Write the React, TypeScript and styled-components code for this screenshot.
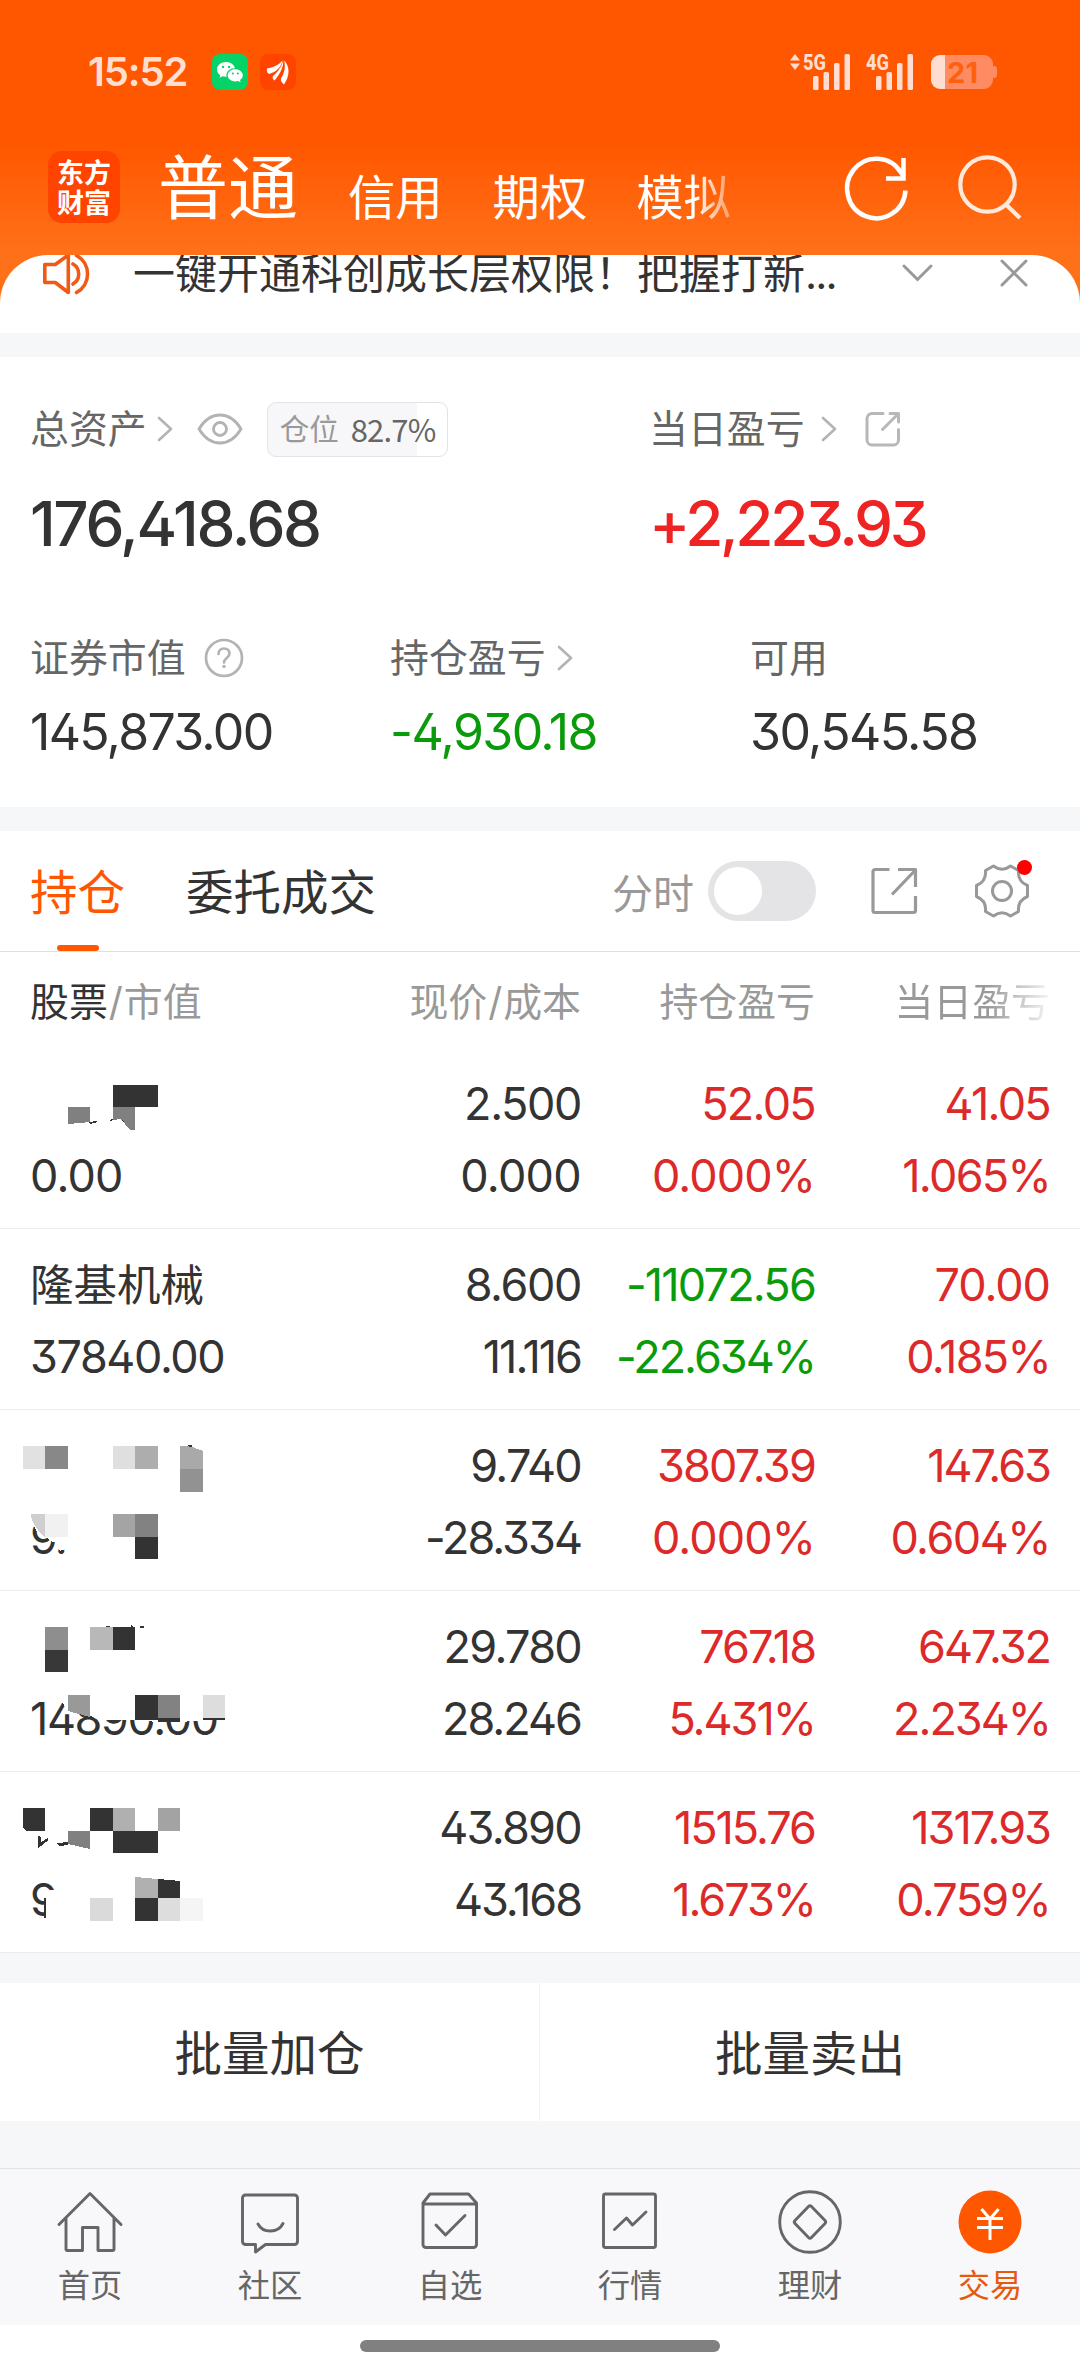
import React from "react";
import styled, { createGlobalStyle } from "styled-components";

const GlobalStyle = createGlobalStyle`
  * { box-sizing: border-box; }
  body {
    margin: 0;
    background: #fff;
    color: #333;
    font-family: Inter, "Noto Sans CJK SC", sans-serif;
    font-feature-settings: "cv02", "cv09";
    font-weight: 400;
  }
  svg { display: block; flex: none; overflow: visible; }
`;

const Page = styled.div`
  width: 1080px;
  height: 2373px;
  overflow: hidden;
  display: flex;
  flex-direction: column;
  background: #f6f7f9;
`;

/* ---------- header ---------- */
const Header = styled.header`
  height: 303px;
  flex: none;
  background: linear-gradient(#ff5700 0, #ff5700 142px, #ff7119 255px, #ff7119 303px);
`;
const StatusBar = styled.div`
  height: 144px;
  padding: 0 83px 0 88px;
  display: flex;
  align-items: center;
  color: #ffddd0;
`;
const Clock = styled.span`
  width: 124px;
  font-size: 40px;
  line-height: 44px;
  font-weight: 600;
  letter-spacing: -1.100px;
  white-space: nowrap;
`;
const NoticeApps = styled.div`
  display: flex;
  gap: 12px;
  flex: 1;
`;
const Signal = styled.div<{ $gap: number }>`
  display: flex;
  margin-right: ${(p) => p.$gap}px;
`;
const TitleBar = styled.nav`
  height: 111px;
  padding: 0 58px 0 48px;
  display: flex;
  align-items: flex-start;
  color: #fff;
`;
const Logo = styled.div`
  width: 72px;
  height: 72px;
  margin-top: 7px;
  border-radius: 14px;
  background: #ff4400;
  display: grid;
  place-content: center;
  font-size: 27px;
  line-height: 30px;
  font-weight: 700;
  font-family: "Noto Sans CJK SC", sans-serif;
`;
const AccountTab = styled.span<{ $size: number; $left: number; $top: number; $fade?: boolean }>`
  font-size: ${(p) => p.$size}px;
  line-height: 80px;
  margin-left: ${(p) => p.$left}px;
  margin-top: ${(p) => p.$top}px;
  white-space: nowrap;
  ${(p) =>
    p.$fade &&
    `background: linear-gradient(90deg, #fff 62%, rgba(255,255,255,.35) 100%);
     -webkit-background-clip: text; background-clip: text; color: transparent;`}
`;
const HeaderIcons = styled.div`
  margin-left: auto;
  margin-top: 11px;
  display: flex;
  gap: 49px;
`;

/* ---------- notice ---------- */
const Notice = styled.section`
  height: 78px;
  margin-top: -48px;
  flex: none;
  overflow: hidden;
  background: #fff;
  border-radius: 48px 48px 0 0;
  padding: 0 52px 0 41px;
  display: flex;
  align-items: flex-start;
`;
const NoticeText = styled.span`
  margin-left: 42px;
  margin-top: -11px;
  width: 769px;
  font-size: 42px;
  line-height: 60px;
  white-space: nowrap;
`;
const Dots = styled.span`
  letter-spacing: -1.800px;
`;
const IconSlot = styled.span<{ $top: number; $left?: number }>`
  display: block;
  margin-top: ${(p) => p.$top}px;
  margin-left: ${(p) => p.$left ?? 0}px;
`;

/* ---------- assets ---------- */
const Assets = styled.section`
  margin-top: 24px;
  height: 450px;
  flex: none;
  background: #fff;
  padding: 42px 30px 0;
`;
const MainFigures = styled.div`
  display: grid;
  grid-template-columns: 619px 1fr;
`;
const SubFigures = styled.div`
  margin-top: 69px;
  display: grid;
  grid-template-columns: 360px 360px 1fr;
`;
const Label = styled.div`
  height: 60px;
  display: flex;
  align-items: center;
  font-size: 38.900px;
  line-height: 60px;
  color: #666;
  white-space: nowrap;
`;
const Gap = styled.span<{ $w: number }>`
  width: ${(p) => p.$w}px;
  flex: none;
`;
const Position = styled.span`
  width: 181px;
  height: 55px;
  border: 1px solid #e2e3e6;
  border-radius: 9px;
  background: linear-gradient(90deg, #f7f7fa 83%, #fff 83%);
  display: flex;
  align-items: center;
  gap: 12px;
  padding-left: 12px;
  font-size: 29.500px;
  color: #999;
`;
const PositionRate = styled.span`
  font-family: "Noto Sans CJK SC", sans-serif;
  font-size: 31px;
  letter-spacing: -0.800px;
  color: #666;
`;
const Total = styled.div<{ $color?: string; $ls: number }>`
  margin-top: 30px;
  font-size: 62px;
  line-height: 70px;
  font-weight: 500;
  letter-spacing: ${(p) => p.$ls}px;
  color: ${(p) => p.$color ?? "#333"};
`;
const Amount = styled.div<{ $color?: string; $ls: number }>`
  margin-top: 14px;
  font-size: 50px;
  line-height: 60px;
  letter-spacing: ${(p) => p.$ls}px;
  color: ${(p) => p.$color ?? "#333"};
`;

/* ---------- holdings ---------- */
const Holdings = styled.section`
  margin-top: 24px;
  flex: none;
  background: #fff;
`;
const TabRow = styled.div`
  height: 121px;
  border-bottom: 1px solid #dedfe0;
  padding: 0 51px 0 30px;
  display: flex;
  align-items: stretch;
`;
const Tab = styled.div<{ $active?: boolean }>`
  font-size: 47.500px;
  line-height: 124px;
  margin-right: 61px;
  color: ${(p) => (p.$active ? "#ff5700" : "#333")};
  display: flex;
  flex-direction: column;
  align-items: center;
  white-space: nowrap;
`;
const TabMark = styled.span`
  width: 42px;
  height: 6px;
  margin-top: -10px;
  border-radius: 3px;
  background: #ff5700;
`;
const Tools = styled.div`
  margin-left: auto;
  display: flex;
  align-items: center;
  font-size: 41px;
  color: #999;
`;
const Toggle = styled.span`
  width: 108px;
  height: 60px;
  border-radius: 30px;
  margin: 0 55px 0 14px;
  padding: 6px;
  background: #e4e4e6;
`;
const Knob = styled.span`
  display: block;
  width: 48px;
  height: 48px;
  border-radius: 50%;
  background: #fff;
`;
const Settings = styled.span`
  position: relative;
  margin-left: 57px;
`;
const RedDot = styled.i`
  position: absolute;
  right: -3px;
  top: -4px;
  width: 15px;
  height: 15px;
  border-radius: 50%;
  background: #f00;
`;
const Row = styled.div`
  display: grid;
  grid-template-columns: 351px 200px 234px 1fr;
  padding: 0 30px;
  text-align: right;
`;
const HeadRow = styled(Row)`
  height: 96px;
  padding-top: 19px;
  font-size: 38.900px;
  line-height: 62px;
  color: #999;
  white-space: nowrap;
`;
const FadingHead = styled.span`
  background: linear-gradient(90deg, #999 60%, rgba(153, 153, 153, 0.1) 100%);
  background-size: 156px 100%;
  background-position: right;
  background-repeat: no-repeat;
  -webkit-background-clip: text;
  background-clip: text;
  color: transparent;
`;
const Left = styled.span`
  text-align: left;
`;
const Strong = styled.span`
  color: #333;
`;
const Slash = styled.span`
  margin: 0 1px;
`;
const StockRow = styled(Row)`
  position: relative;
  height: 181px;
  padding-top: 26px;
  border-bottom: 1px solid #ebecee;
`;
const Cell = styled.div<{ $color?: string; $left?: boolean }>`
  display: flex;
  flex-direction: column;
  gap: 12px;
  font-size: 45px;
  line-height: 60px;
  white-space: nowrap;
  text-align: ${(p) => (p.$left ? "left" : "right")};
  color: ${(p) => p.$color ?? "#333"};
`;
const Line = styled.span<{ $ls?: number }>`
  height: 60px;
  letter-spacing: ${(p) => p.$ls ?? 0}px;
`;
const StockName = styled(Line)`
  font-size: 43.500px;
`;
const Mosaic = styled.svg`
  position: absolute;
  left: 0;
  top: 0;
`;

/* ---------- bottom ---------- */
const Batch = styled.div`
  margin-top: 30px;
  height: 138px;
  flex: none;
  display: grid;
  grid-template-columns: 540px 540px;
  background: #fff;
`;
const BatchButton = styled.button`
  border: 0;
  border-right: 1px solid #f3f4f6;
  padding: 0 0 3px;
  background: none;
  color: #333;
  font: inherit;
  font-size: 47.500px;
  &:last-child { border-right: 0; }
`;
const NavBar = styled.nav`
  margin-top: 47px;
  height: 157px;
  flex: none;
  border-top: 1px solid #e2e3e6;
  background: #f8f8fa;
  display: grid;
  grid-template-columns: repeat(6, 180px);
`;
const NavItem = styled.div<{ $active?: boolean }>`
  display: flex;
  flex-direction: column;
  align-items: center;
  padding-top: 21px;
  font-size: 32.300px;
  line-height: 46px;
  gap: 7px;
  color: ${(p) => (p.$active ? "#e65a10" : "#666")};
`;
const HomeArea = styled.div`
  flex: 1;
  background: #fff;
  padding-top: 15px;
`;
const HomeBar = styled.div`
  width: 360px;
  height: 12px;
  margin: 0 auto;
  border-radius: 6px;
  background: #808080;
`;

/* ---------- icons ---------- */
const Chevron = () => (
  <svg width="16" height="26" viewBox="0 0 16 26" fill="none" stroke="#b3b3b3" strokeWidth="2.6" strokeLinecap="round" strokeLinejoin="round">
    <path d="M2 2 14 13 2 24" />
  </svg>
);

const WeChat = () => (
  <svg width="36" height="36" viewBox="0 0 36 36">
    <rect width="36" height="36" rx="8" fill="#05d367" />
    <path fill="#fff" d="M14 8c-5 0-9 3.2-9 7.400 0 2.400 1.300 4.500 3.300 5.900l-.7 2.500 3-1.500c1 .3 2.200.5 3.400.5h.7c-.2-.6-.3-1.200-.3-1.800 0-3.800 3.600-6.800 8-6.800h.6C22.200 10.700 18.400 8 14 8z" />
    <path fill="#fff" d="M23.200 15.200c-4.200 0-7.500 2.700-7.500 6.100s3.300 6.100 7.500 6.100c1 0 2-.2 2.900-.4l2.500 1.300-.6-2.200c1.700-1.100 2.800-2.800 2.800-4.800 0-3.400-3.400-6.100-7.600-6.100z" />
    <g fill="#05d367">
      <circle cx="11" cy="13" r="1.200" /><circle cx="17" cy="13" r="1.200" />
      <circle cx="20.800" cy="19.600" r="1" /><circle cx="25.800" cy="19.600" r="1" />
    </g>
  </svg>
);

const EastMoney = () => (
  <svg width="36" height="36" viewBox="0 0 36 36">
    <rect width="36" height="36" rx="8" fill="#ff4400" />
    <g fill="#fff">
      <path d="M7 14.500C13 13.500 19 11 22.500 6.500 21.500 12.500 16.500 18 9 20 7 19 6.500 16.500 7 14.500z" />
      <path d="M23.200 6.500C23.500 13 20.500 19.500 14.500 26.500 12.500 25 12.300 23.500 13 22 18.500 17.500 21.500 12.500 23.200 6.500z" />
      <path d="M24.200 6.500C29.500 12 30.500 21 24 30.500 21.500 28.500 20.500 26.500 21 24.500 24.800 18.500 25.500 12.500 24.200 6.500z" />
    </g>
  </svg>
);

const Bars = ({ name, arrows }: { name: string; arrows?: boolean }) => (
  <svg width="64" height="38" viewBox="0 0 64 38" fill="#ffddd0">
    {arrows && <path d="M9 0 14 6.500H4zM9 16 4 9.500h10z" transform="translate(0 1)" />}
    <text x="17" y="16.500" fontFamily="Roboto" fontSize="22" fontWeight="800" textLength="23" lengthAdjust="spacingAndGlyphs">{name}</text>
    <rect x="27" y="23" width="5.500" height="14" rx="1.500" />
    <rect x="37.500" y="19" width="5.500" height="18" rx="1.500" />
    <rect x="48" y="10" width="5.500" height="27" rx="1.500" />
    <rect x="58.500" y="1" width="5.500" height="36" rx="1.500" />
  </svg>
);

const Battery = () => (
  <svg width="66" height="34" viewBox="0 0 66 34">
    <path fill="#ff8b62" d="M14 0H53a9 9 0 0 1 9 9v2c3 0 4 1 4 3v6c0 2-1 3-4 3v2a9 9 0 0 1-9 9H14z" />
    <path fill="#ffddd0" d="M9 0h5v34H9a9 9 0 0 1-9-9V9a9 9 0 0 1 9-9z" />
    <text x="16" y="28" fontFamily="Inter" fontSize="29" fontWeight="700" fill="#ff6010" textLength="31">21</text>
  </svg>
);

const Refresh = () => (
  <svg width="64" height="66" viewBox="0 0 64 66" fill="none" stroke="#fff" strokeWidth="4.500">
    <path d="M60.500 35.500A29.200 29.800 0 1 1 56 17.500L58.800 22" />
    <path d="M58.500 3v20.500H41" />
  </svg>
);

const Search = () => (
  <svg width="64" height="66" viewBox="0 0 64 66" fill="none" stroke="#ffe8dc" strokeWidth="4.200">
    <circle cx="29.500" cy="29.500" r="27.200" />
    <path d="M48 49.500 62 63" />
  </svg>
);

const Speaker = () => (
  <svg width="49" height="43" viewBox="0 0 49 43" fill="none" stroke="#f05a14" strokeWidth="3.600" strokeLinejoin="round" strokeLinecap="round">
    <path d="M2.800 11.500h10.500L26.300 2v37.500L13.300 29.500H2.800zM31 11a11.600 11.600 0 0 1 0 20M34.500 2.500a21 21 0 0 1 0 37" />
  </svg>
);

const Eye = () => (
  <svg width="46" height="32" viewBox="0 0 46 32" fill="none" stroke="#b3b3b3" strokeWidth="2.800" strokeLinejoin="round">
    <path d="M2 16C8 6 15 2 23 2s15 4 21 14c-6 10-13 14-21 14S8 26 2 16z" />
    <circle cx="23" cy="16" r="6.500" />
  </svg>
);

const ExportSmall = () => (
  <svg width="36" height="36" viewBox="0 0 36 36" fill="none" stroke="#b8b8b8" strokeWidth="3" strokeLinecap="round" strokeLinejoin="round">
    <path d="M18 2.500H7A5 5 0 0 0 2 7.500V29a5 5 0 0 0 5 5H28.500a5 5 0 0 0 5-5V18.500M25 2.500h8.500V11M33 3 17.500 18.500" />
  </svg>
);

const Question = () => (
  <svg width="40" height="40" viewBox="0 0 40 40" fill="none" stroke="#b3b3b3" strokeWidth="2.700" strokeLinecap="round">
    <circle cx="20" cy="20" r="18" />
    <path d="M14.500 16c0-3.500 2.500-5.500 5.500-5.500s5.500 2 5.500 5c0 4.500-5.500 4.500-5.500 9" />
    <circle cx="20" cy="28.500" r="1" fill="#b3b3b3" stroke="#b3b3b3" strokeWidth="1.500" />
  </svg>
);

const ExportLarge = () => (
  <svg width="47" height="48" viewBox="0 0 47 48" fill="none" stroke="#999" strokeWidth="3.200" strokeLinejoin="round">
    <path d="M18.500 2.500H4a2 2 0 0 0-2 2V43.500a2 2 0 0 0 2 2H42.500a2 2 0 0 0 2-2V29M27 2.500H44.500V20M44.500 3 21 27.500" />
  </svg>
);

const Gear = () => (
  <svg width="54" height="54" viewBox="0 0 54 54" fill="none" stroke="#999" strokeWidth="3" strokeLinejoin="round">
    <path d="M18.500 2Q27 8.500 35.500 2L43.500 6.500Q42.500 17.500 52.500 21.500V32.500Q42.500 36.500 43.500 47.500L35.500 52Q27 45.500 18.500 52L10.500 47.500Q11.500 36.500 1.500 32.500V21.500Q11.500 17.500 10.500 6.500Z" />
    <circle cx="27" cy="27" r="9.500" />
  </svg>
);

const NavIcon = ({ children }: { children: React.ReactNode }) => (
  <svg width="66" height="66" viewBox="0 0 66 66" fill="none" stroke="#666" strokeWidth="2.900" strokeLinecap="round" strokeLinejoin="round">
    {children}
  </svg>
);

const navItems = [
  { label: "首页", icon: <path d="M2 34.500 33 3.500 64 34.500M9 28.500V59.500a1 1 0 0 0 1 1H25.500V37.500H41V60.500H56a1 1 0 0 0 1-1V28.500" /> },
  { label: "社区", icon: <path d="M8.500 5H57.500a3 3 0 0 1 3 3V51.500a3 3 0 0 1-3 3H28.500L18.500 62V54.500H8.500a3 3 0 0 1-3-3V8a3 3 0 0 1 3-3zM21 34c5 9.500 20 9.500 25-.5" /> },
  { label: "自选", icon: <path d="M13 4H51.500L59.500 13V54.500a3 3 0 0 1-3 3H9a3 3 0 0 1-3-3V13zM6 14H59.500M19 35 28.500 45 48 25.500" /> },
  { label: "行情", icon: <path d="M8.500 4H56.500a2 2 0 0 1 2 2V55.500a2 2 0 0 1-2 2H8.500a2 2 0 0 1-2-2V6a2 2 0 0 1 2-2zM17.500 39.500 29.500 28 35.500 35 49 22" /> },
  { label: "理财", icon: <><circle cx="33" cy="32" r="30.300" /><path d="M31.500 16.500q1.500-1.500 3 0L48 30.500q1.500 1.500 0 3L34.500 47.500q-1.500 1.500-3 0L18 33.500q-1.500-1.500 0-3z" /></> },
  { label: "交易", active: true, icon: <><circle cx="33" cy="32" r="31.500" fill="#ff5700" stroke="none" /><path stroke="#fff" strokeWidth="3" strokeLinecap="butt" d="M24.500 19 33 29 41.500 19M20 28.500H46M20 37.500H46M33 28V50" /></> },
];

/* ---------- data ---------- */
const RED = "#dc2a2a";
const GREEN = "#0a9b0a";
type Block = [number, number, number, number, string];
interface Stock {
  name: string;
  value: string;
  price: [string, string];
  hold: [string, string];
  day: [string, string];
  blocks?: Block[];
  masks?: string[];
  marks?: [string, string][];
}
const D = "#333";
const stocks: Stock[] = [
  {
    name: "", value: "0.00",
    price: ["2.500", "0.000"], hold: ["52.05", "0.000%"], day: ["41.05", "1.065%"],
    blocks: [[113, 37, 45, 22, D]],
    marks: [["M68 59h22v15l-22 2z", "#808080"], ["M113 59h22v23h-5l-9-11-8 1z", "#808080"], ["M89 74l8-1-2 2-5 .8zM108 72l5-1-1 2zM122 72l4 3-3-1z", D]],
  },
  {
    name: "隆基机械", value: "37840.00",
    price: ["8.600", "11.116"], hold: ["-11072.56", "-22.634%"], day: ["70.00", "0.185%"],
  },
  {
    name: "", value: "9.",
    price: ["9.740", "-28.334"], hold: ["3807.39", "0.000%"], day: ["147.63", "0.604%"],
    blocks: [[23, 36, 22, 23, "#e1e1e1"], [45, 36, 23, 23, "#888"], [113, 36, 22, 23, "#dfdfdf"], [135, 36, 23, 23, "#adadad"], [180, 59, 23, 23, "#929292"], [45, 104, 23, 23, "#f1f1f1"], [113, 104, 22, 23, "#a4a4a4"], [135, 104, 23, 23, "#828282"], [135, 127, 23, 22, D]],
    masks: ["M28 108h5l3 8 12 11 20-4v12l-18-4-3-3-8-2-6-12z", "M54 124h14v14l-8 3z"],
    marks: [["M180 36h10l13 5v18h-23z", "#a9a9a9"], ["M31 104h14v23q-10-8-14-20z", "#cfcfcf"], ["M188 35h4v2h-3z", D]],
  },
  {
    name: "", value: "14890.00",
    price: ["29.780", "28.246"], hold: ["767.18", "5.431%"], day: ["647.32", "2.234%"],
    blocks: [[45, 36, 23, 23, "#8e8e8e"], [45, 59, 23, 22, "#383838"], [90, 36, 23, 23, "#b8b8b8"], [113, 36, 22, 23, D], [135, 104, 23, 25, D], [158, 104, 22, 23, "#828282"], [158, 127, 22, 4, D], [203, 104, 22, 23, "#ddd"], [203, 127, 22, 2, D]],
    masks: ["M60 108 68 120 90 125 103 129 135 129 158 131 182 131 203 129 225 128V104H66z"],
    marks: [["M68 104h22v22l-22-6z", "#999"], ["M106 35h4v1h-4zM131 34l3 2h-3zM140 35h4v2h-4z", D]],
  },
  {
    name: "", value: "9",
    price: ["43.890", "43.168"], hold: ["1515.76", "1.673%"], day: ["1317.93", "0.759%"],
    blocks: [[90, 36, 23, 23, D], [113, 36, 22, 23, "#b0b0b0"], [158, 36, 22, 23, "#a3a3a3"], [113, 59, 45, 22, D], [90, 126, 23, 23, "#dadada"], [135, 126, 23, 23, D], [158, 126, 22, 23, "#ddd"], [180, 126, 23, 23, "#f5f5f5"]],
    masks: ["M45 118h20v32H45z"],
    marks: [["M23 36h22v23H27l-4-3z", D], ["M68 59h22v18l-22-5z", "#808080"], ["M135 105l23 2v19h-23z", "#b0b0b0"], ["M158 107l22 2v17h-22z", D], ["M38 64l3 1v5l7-4 .5 2-10 8zM57 71l11-1v3l-9 1z", D], ["M44 126h1.500v20H44z", D]],
  },
];

const tracking = (text: string) => {
  const zeros = text.split("").filter((c) => c === "0").length;
  return Math.round((-2 + (1.6 * zeros) / (text.length || 1)) * 10) / 10;
};
const Figure = ({ children }: { children: string }) => <Line $ls={tracking(children)}>{children}</Line>;

export default function App() {
  return (
    <Page>
      <GlobalStyle />
      <Header>
        <StatusBar>
          <Clock>15:52</Clock>
          <NoticeApps><WeChat /><EastMoney /></NoticeApps>
          <Signal $gap={-1}><Bars name="5G" arrows /></Signal>
          <Signal $gap={18}><Bars name="4G" /></Signal>
          <Battery />
        </StatusBar>
        <TitleBar>
          <Logo><span>东方</span><span>财富</span></Logo>
          <AccountTab $size={70} $left={38} $top={5}>普通</AccountTab>
          <AccountTab $size={47.3} $left={50} $top={14}>信用</AccountTab>
          <AccountTab $size={47.3} $left={50} $top={14}>期权</AccountTab>
          <AccountTab $size={47.3} $left={49} $top={14} $fade>模拟</AccountTab>
          <HeaderIcons><Refresh /><Search /></HeaderIcons>
        </TitleBar>
      </Header>

      <Notice>
        <IconSlot $top={-2} $left={1}><Speaker /></IconSlot>
        <NoticeText>一键开通科创成长层权限！把握打新<Dots>...</Dots></NoticeText>
        <IconSlot $top={9}>
          <svg width="31" height="18" viewBox="0 0 31 18" fill="none" stroke="#999" strokeWidth="3" strokeLinecap="round"><path d="M2 2 15.500 15.500 29 2" /></svg>
        </IconSlot>
        <IconSlot $top={4} $left={67}>
          <svg width="28" height="28" viewBox="0 0 28 28" fill="none" stroke="#999" strokeWidth="3" strokeLinecap="round"><path d="M2 2 26 26M26 2 2 26" /></svg>
        </IconSlot>
      </Notice>

      <Assets>
        <MainFigures>
          <div>
            <Label>
              总资产<Gap $w={10} /><Chevron /><Gap $w={24} /><Eye /><Gap $w={24} />
              <Position>仓位<PositionRate>82.7%</PositionRate></Position>
            </Label>
            <Total $ls={-2.4}>176,418.68</Total>
          </div>
          <div>
            <Label>当日盈亏<Gap $w={16} /><Chevron /><Gap $w={28} /><ExportSmall /></Label>
            <Total $ls={-3.4} $color="#ee2424">+2,223.93</Total>
          </div>
        </MainFigures>
        <SubFigures>
          <div>
            <Label>证券市值<Gap $w={18} /><Question /></Label>
            <Amount $ls={-1.7}>145,873.00</Amount>
          </div>
          <div>
            <Label>持仓盈亏<Gap $w={11} /><Chevron /></Label>
            <Amount $ls={-1.6} $color={GREEN}>-4,930.18</Amount>
          </div>
          <div>
            <Label>可用</Label>
            <Amount $ls={-1.6}>30,545.58</Amount>
          </div>
        </SubFigures>
      </Assets>

      <Holdings>
        <TabRow>
          <Tab $active>持仓<TabMark /></Tab>
          <Tab>委托成交</Tab>
          <Tools>
            分时<Toggle><Knob /></Toggle>
            <ExportLarge />
            <Settings><Gear /><RedDot /></Settings>
          </Tools>
        </TabRow>
        <HeadRow>
          <Left><Strong>股票</Strong><Slash>/</Slash>市值</Left>
          <span>现价<Slash>/</Slash>成本</span>
          <span>持仓盈亏</span>
          <FadingHead>当日盈亏</FadingHead>
        </HeadRow>
        {stocks.map((s) => (
          <StockRow key={s.price[0]}>
            <Cell $left><StockName>{s.name}</StockName><Figure>{s.value}</Figure></Cell>
            <Cell><Figure>{s.price[0]}</Figure><Figure>{s.price[1]}</Figure></Cell>
            <Cell $color={s.hold[0].startsWith("-") ? GREEN : RED}><Figure>{s.hold[0]}</Figure><Figure>{s.hold[1]}</Figure></Cell>
            <Cell $color={RED}><Figure>{s.day[0]}</Figure><Figure>{s.day[1]}</Figure></Cell>
            {s.marks && (
              <Mosaic width="240" height="170" viewBox="0 0 240 170" shapeRendering="crispEdges">
                {s.masks?.map((d) => <path key={d} d={d} fill="#fff" />)}
                {s.blocks?.map(([x, y, w, h, c]) => <rect key={`${x}-${y}`} x={x} y={y} width={w} height={h} fill={c} />)}
                {s.marks.map(([d, c]) => <path key={d} d={d} fill={c} />)}
              </Mosaic>
            )}
          </StockRow>
        ))}
      </Holdings>

      <Batch>
        <BatchButton>批量加仓</BatchButton>
        <BatchButton>批量卖出</BatchButton>
      </Batch>

      <NavBar>
        {navItems.map((n) => (
          <NavItem key={n.label} $active={n.active}>
            <NavIcon>{n.icon}</NavIcon>
            {n.label}
          </NavItem>
        ))}
      </NavBar>
      <HomeArea><HomeBar /></HomeArea>
    </Page>
  );
}
